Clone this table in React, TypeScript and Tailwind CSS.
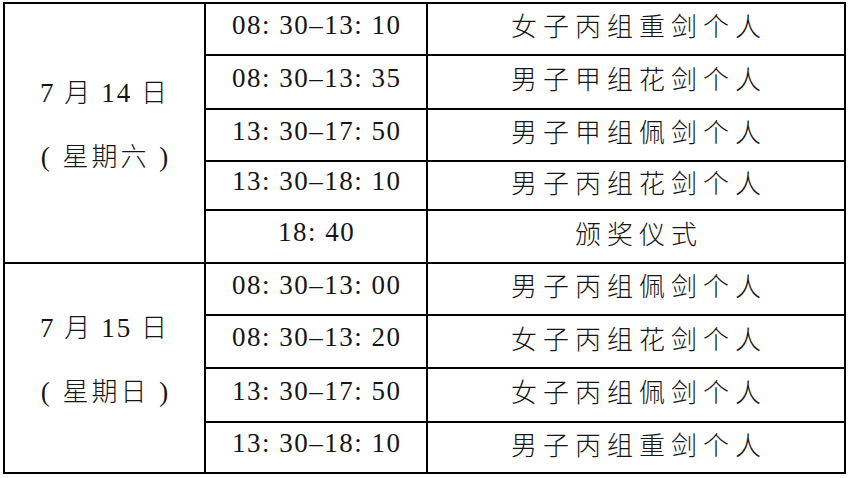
import React from "react";

type Row = { time: string; event: string };

const day1: Row[] = [
  { time: "08: 30–13: 10", event: "女子丙组重剑个人" },
  { time: "08: 30–13: 35", event: "男子甲组花剑个人" },
  { time: "13: 30–17: 50", event: "男子甲组佩剑个人" },
  { time: "13: 30–18: 10", event: "男子丙组花剑个人" },
  { time: "18: 40", event: "颁奖仪式" },
];

const day2: Row[] = [
  { time: "08: 30–13: 00", event: "男子丙组佩剑个人" },
  { time: "08: 30–13: 20", event: "女子丙组花剑个人" },
  { time: "13: 30–17: 50", event: "女子丙组佩剑个人" },
  { time: "13: 30–18: 10", event: "男子丙组重剑个人" },
];

function TimeCell({ t }: { t: string }) {
  return (
    <div className="bg-white flex items-center justify-center pb-[8px]">
      <span className="font-['Liberation_Serif'] text-[27px] tracking-[1.5px] pl-[1.5px] text-[#151515] leading-none">
        {t}
      </span>
    </div>
  );
}

function EventCell({ e }: { e: string }) {
  return (
    <div className="bg-white flex items-center justify-center pb-[8px]">
      <span className="font-['Noto_Sans_CJK_SC'] font-light text-[26px] tracking-[6px] pl-[6px] text-[#151515] leading-none">
        {e}
      </span>
    </div>
  );
}

function DateCell({ day, week, span }: { day: string; week: string; span: string }) {
  return (
    <div
      className={`bg-white flex flex-col items-center justify-center pb-[19px] text-[#151515] font-['Liberation_Serif'] text-[27px] ${span}`}
    >
      <div className="leading-[62px] whitespace-pre tracking-[2px]">
        7 <span className="font-['Noto_Sans_CJK_SC'] font-light text-[26px]">月</span> {day}{" "}
        <span className="font-['Noto_Sans_CJK_SC'] font-light text-[26px]">日</span>
      </div>
      <div className="leading-[62px] whitespace-pre tracking-[3px] pl-[3px]">
        ( <span className="font-['Noto_Sans_CJK_SC'] font-light text-[26px]">{week}</span> )
      </div>
    </div>
  );
}

export default function App() {
  return (
    <div className="w-[848px] h-[478px] bg-white overflow-hidden">
      <div className="ml-[3px] mt-[2px] w-[843px] h-[472px] bg-black p-[2px] grid gap-[2px] grid-cols-[199px_220px_416px] grid-rows-[50px_52px_50px_47px_51px_50px_51px_52px_49px]">
        <DateCell span="row-span-5 col-start-1 row-start-1" day="14" week="星期六" />
        {day1.map((r, i) => (
          <React.Fragment key={"a" + i}>
            <TimeCell t={r.time} />
            <EventCell e={r.event} />
          </React.Fragment>
        ))}
        <DateCell span="row-span-4 col-start-1 row-start-6" day="15" week="星期日" />
        {day2.map((r, i) => (
          <React.Fragment key={"b" + i}>
            <TimeCell t={r.time} />
            <EventCell e={r.event} />
          </React.Fragment>
        ))}
      </div>
    </div>
  );
}
